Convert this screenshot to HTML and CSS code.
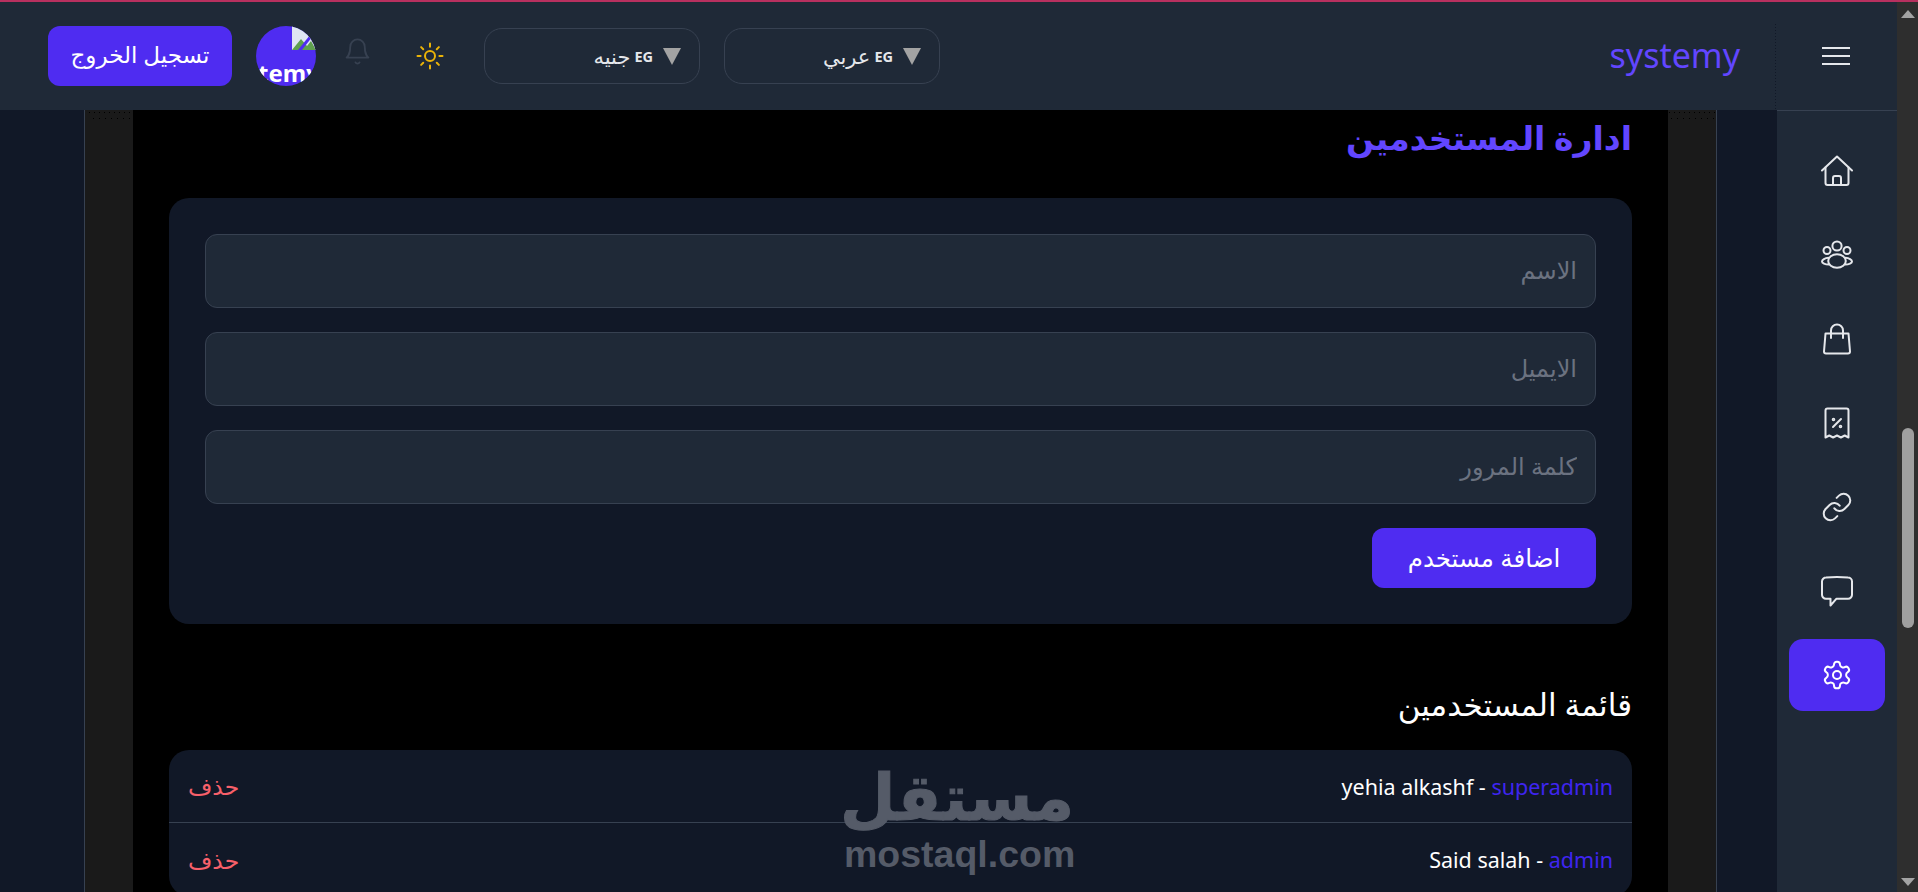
FILE: index.html
```html
<!DOCTYPE html>
<html lang="ar" dir="rtl">
<head>
    <meta charset="UTF-8">
    <title>systemy</title>
    <link rel="stylesheet" href="styles.css">
</head>
<body>
    <div class="top-line"></div>
    <div class="shell">
        <div class="scrollbar">
            <span class="arrow-up"></span>
            <div class="scroll-track"><div class="scroll-thumb"></div></div>
            <span class="arrow-down"></span>
        </div>

        <div class="main">
            <header class="header">
                <div class="menu-cell">
                    <svg class="burger" viewBox="0 0 28 18" width="28" height="18"><path d="M0 1h28M0 9h28M0 17h28"/></svg>
                </div>
                <div class="logo" dir="ltr">systemy</div>
                <div class="header-tools">
                    <div class="picker"><span class="tri"></span><span class="flag">EG</span><span>عربي</span></div>
                    <div class="picker"><span class="tri"></span><span class="flag">EG</span><span>جنيه</span></div>
                    <div class="tool tool-sun">
                        <svg viewBox="0 0 24 24" width="30" height="30" class="ico sun"><circle cx="12" cy="12" r="4"/><path d="M12 2v2.500M12 19.500V22M4.900 4.900l1.700 1.700M17.400 17.400l1.700 1.700M2 12h2.500M19.500 12H22M4.900 19.100l1.700-1.700M17.400 6.600l1.700-1.700"/></svg>
                    </div>
                    <div class="tool tool-bell">
                        <svg viewBox="0 0 24 24" width="29" height="29" class="ico bell"><path d="M6 8a6 6 0 0 1 12 0c0 7 3 9 3 9H3s3-2 3-9"/><path d="M10.300 21a1.900 1.900 0 0 0 3.400 0"/></svg>
                    </div>
                    <div class="avatar">
                        <svg class="broken" viewBox="0 0 24 24" width="24" height="24"><path d="M0 0h24v24H0z" fill="#dfe6f2"/><path d="M0 24l9-11 6 7 4-5 5 9z" fill="#5fa04e"/><path d="M6 24L22 4l2 2L10 24z" fill="#4f2cf1"/></svg>
                        <span class="avatar-alt" dir="ltr">temy</span>
                    </div>
                    <button class="logout">تسجيل الخروج</button>
                </div>
            </header>

            <div class="body-row">
                <nav class="sidebar">
                    <a class="nav-item">
                        <svg viewBox="0 0 32 32" class="ico nav-ico"><path d="M1 15.500L16 1.500l15 14"/><path d="M4.500 12.500V28a2 2 0 0 0 2 2h19a2 2 0 0 0 2-2V12.500"/><path d="M12 30v-7a2 2 0 0 1 2-2h4a2 2 0 0 1 2 2v7"/></svg>
                    </a>
                    <a class="nav-item">
                        <svg viewBox="0 0 32 32" class="ico nav-ico"><circle cx="16" cy="7" r="4.600"/><circle cx="6" cy="11.500" r="3.500"/><circle cx="26" cy="11.500" r="3.500"/><ellipse cx="16" cy="22" rx="8.800" ry="6.800"/><path d="M7.500 18.800C4 19 1 21 1 22.500s3 3 6.800 3M24.500 18.800c3.500.2 6.500 2.200 6.500 3.700s-3 3-6.800 3"/></svg>
                    </a>
                    <a class="nav-item">
                        <svg viewBox="0 0 32 32" class="ico nav-ico"><path d="M4.500 10.500h23L29 28.500a2 2 0 0 1-2 2H5a2 2 0 0 1-2-2z"/><path d="M10 15V7.500a6 6 0 0 1 12 0V15"/></svg>
                    </a>
                    <a class="nav-item">
                        <svg viewBox="0 0 32 32" class="ico nav-ico"><path d="M4.500 30.500V3.500a2 2 0 0 1 2-2h19a2 2 0 0 1 2 2v27l-3.800-2-3.800 2-3.900-2-3.900 2-3.800-2z"/><path d="M12 20l8-8"/><circle cx="12.500" cy="12.500" r=".8"/><circle cx="19.500" cy="19.500" r=".8"/></svg>
                    </a>
                    <a class="nav-item">
                        <svg viewBox="0 0 24 24" class="ico nav-ico thin"><path d="M10 13a5 5 0 0 0 7.540.54l3-3a5 5 0 0 0-7.070-7.070l-1.720 1.710"/><path d="M14 11a5 5 0 0 0-7.540-.54l-3 3a5 5 0 0 0 7.070 7.070l1.710-1.710"/></svg>
                    </a>
                    <a class="nav-item">
                        <svg viewBox="0 0 32 32" class="ico nav-ico"><path d="M5 2.500c7-.6 15-.6 22 0a4 4 0 0 1 4 4v13a4 4 0 0 1-4 4.200H15.500L9.500 30.500v-6.800H5a4 4 0 0 1-4-4.200v-13a4 4 0 0 1 4-4z"/></svg>
                    </a>
                    <a class="nav-item active">
                        <svg viewBox="0 0 24 24" class="ico nav-ico thin"><path d="M12.220 2h-.44a2 2 0 0 0-2 2v.18a2 2 0 0 1-1 1.730l-.43.25a2 2 0 0 1-2 0l-.15-.08a2 2 0 0 0-2.730.73l-.22.38a2 2 0 0 0 .73 2.730l.15.1a2 2 0 0 1 1 1.720v.51a2 2 0 0 1-1 1.740l-.15.09a2 2 0 0 0-.73 2.730l.22.38a2 2 0 0 0 2.730.73l.15-.08a2 2 0 0 1 2 0l.43.25a2 2 0 0 1 1 1.730V20a2 2 0 0 0 2 2h.44a2 2 0 0 0 2-2v-.18a2 2 0 0 1 1-1.730l.43-.25a2 2 0 0 1 2 0l.15.08a2 2 0 0 0 2.730-.73l.22-.39a2 2 0 0 0-.73-2.730l-.15-.08a2 2 0 0 1-1-1.740v-.5a2 2 0 0 1 1-1.740l.15-.09a2 2 0 0 0 .73-2.730l-.22-.38a2 2 0 0 0-2.730-.73l-.15.08a2 2 0 0 1-2 0l-.43-.25a2 2 0 0 1-1-1.730V4a2 2 0 0 0-2-2z"/><circle cx="12" cy="12" r="3"/></svg>
                    </a>
                </nav>

                <div class="content">
                    <div class="frame">
                        <div class="page">
                            <h1>ادارة المستخدمين</h1>

                            <form class="card">
                                <input type="text" placeholder="الاسم">
                                <input type="text" placeholder="الايميل">
                                <input type="text" placeholder="كلمة المرور">
                                <button type="button" class="add-btn">اضافة مستخدم</button>
                            </form>

                            <h2>قائمة المستخدمين</h2>

                            <div class="user-list">
                                <div class="user-row">
                                    <span dir="ltr"><span class="name">yehia alkashf - </span><span class="role">superadmin</span></span>
                                    <a class="del">حذف</a>
                                </div>
                                <div class="user-row">
                                    <span dir="ltr"><span class="name">Said salah - </span><span class="role">admin</span></span>
                                    <a class="del">حذف</a>
                                </div>
                            </div>
                        </div>
                    </div>
                </div>
            </div>
        </div>
    </div>

    <div class="watermark">
        <div class="wm-ar">مستقل</div>
        <div class="wm-en" dir="ltr">mostaql.com</div>
    </div>
</body>
</html>
```

FILE: styles.css
```css
* {
    margin: 0;
    padding: 0;
    box-sizing: border-box;
    font-family: "Noto Sans", "DejaVu Sans", sans-serif;
}

html, body {
    height: 892px;
    overflow: hidden;
    background-color: #111827;
}

.top-line {
    height: 2px;
    background-color: #b8305f;
}

.shell {
    display: flex;
    height: 890px;
}

/* scrollbar */
.scrollbar {
    width: 21px;
    flex-shrink: 0;
    background-color: #2e2e2e;
    display: flex;
    flex-direction: column;
    align-items: center;
}

.arrow-up, .arrow-down {
    width: 0;
    height: 0;
    border-left: 7px solid transparent;
    border-right: 7px solid transparent;
    flex-shrink: 0;
}

.arrow-up {
    border-bottom: 8px solid #a3a3a3;
    margin-top: 8px;
}

.arrow-down {
    border-top: 8px solid #a3a3a3;
    margin-bottom: 6px;
}

.scroll-track {
    flex: 1;
    width: 100%;
    padding-top: 410px;
    display: flex;
    justify-content: center;
}

.scroll-thumb {
    width: 12px;
    height: 200px;
    border-radius: 6px;
    background-color: #9f9f9f;
}

.main {
    flex: 1;
    min-width: 0;
    display: flex;
    flex-direction: column;
}

/* header */
.header {
    height: 108px;
    flex-shrink: 0;
    background-color: #1f2937;
    display: flex;
    align-items: center;
    position: relative;
    z-index: 2;
}

.menu-cell {
    width: 122px;
    height: 100%;
    display: flex;
    align-items: center;
    justify-content: center;
    background-image: repeating-linear-gradient(180deg, #111827 0 1px, transparent 1px 3px);
    background-size: 1px 86px;
    background-position: left bottom;
    background-repeat: no-repeat;
    flex-shrink: 0;
}

.burger path {
    stroke: #e5e7eb;
    stroke-width: 2;
    fill: none;
}

.logo {
    font-size: 34px;
    color: #6246ff;
    margin-right: 35px;
    line-height: 1;
    padding-bottom: 2px;
}

.header-tools {
    margin-right: auto;
    padding-left: 48px;
    display: flex;
    align-items: center;
}

.picker {
    width: 216px;
    height: 56px;
    border: 1px solid #374151;
    border-radius: 18px;
    padding: 0 18px;
    display: flex;
    align-items: center;
    gap: 4px;
    color: #e5e7eb;
    font-size: 21px;
    margin-left: 24px;
}

.picker .flag {
    font-size: 14.500px;
    font-weight: 700;
    margin: 0 6px 0 0;
}

.tri {
    width: 0;
    height: 0;
    border-left: 9.500px solid transparent;
    border-right: 9.500px solid transparent;
    border-top: 17px solid #a3a3a3;
}

.tool {
    display: flex;
    align-items: center;
    justify-content: center;
}

.tool-sun {
    margin-left: 43px;
    margin-right: 15px;
}

.tool-bell {
    margin-left: 27px;
    margin-bottom: 10px;
}

.ico {
    fill: none;
    stroke: #e5e7eb;
    stroke-width: 2;
    stroke-linecap: round;
    stroke-linejoin: round;
}

.sun {
    stroke: #eab308;
    stroke-width: 1.600;
}

.bell {
    stroke: #374151;
    stroke-width: 1.500;
}

.avatar {
    width: 60px;
    height: 60px;
    border-radius: 50%;
    background-color: #4f2cf1;
    overflow: hidden;
    position: relative;
    margin-left: 24px;
}

.broken {
    position: absolute;
    top: 0;
    right: 0;
}

.avatar-alt {
    position: absolute;
    top: 32px;
    left: 2px;
    color: #fff;
    font-weight: 700;
    font-size: 24px;
    line-height: 30px;
    white-space: nowrap;
}

button {
    background-color: #4f2cf1;
    color: #fff;
    border: none;
    cursor: pointer;
}

.logout {
    width: 184px;
    height: 60px;
    border-radius: 12px;
    font-size: 23px;
    padding-bottom: 4px;
}

/* sidebar */
.body-row {
    flex: 1;
    min-height: 0;
    display: flex;
}

.sidebar {
    width: 120px;
    flex-shrink: 0;
    background-color: #1f2937;
    border-top: 1px solid #374151;
    padding: 24px 12px 0;
    display: flex;
    flex-direction: column;
    gap: 12px;
}

.nav-item {
    height: 72px;
    border-radius: 14px;
    display: flex;
    align-items: center;
    justify-content: center;
}

.nav-item.active {
    background-color: #4f2cf1;
}

.nav-ico {
    width: 32px;
    height: 32px;
}

.nav-ico.thin {
    stroke-width: 1.500;
}

.active .nav-ico {
    stroke: #fff;
}

/* page */
.content {
    flex: 1;
    min-width: 0;
    padding: 0 60px 0 84px;
    overflow: hidden;
}

.frame {
    height: 100%;
    border-left: 1px solid #374151;
    border-right: 1px solid #374151;
    background-color: #1a1a1a;
    background-image:
        repeating-linear-gradient(90deg, #000 0 1px, transparent 1px 5px),
        repeating-linear-gradient(90deg, #000 0 1px, transparent 1px 6px);
    background-size: 100% 1px, 100% 1px;
    background-position: 4px 2px, 8px 8px;
    background-repeat: no-repeat;
    padding: 0 48px;
}

.page {
    height: 100%;
    background-color: #000;
    padding: 0 36px;
}

h1 {
    color: #6246ff;
    font-size: 33px;
    font-weight: 700;
    height: 88px;
    line-height: 50px;
    padding-top: 3px;
}

.card {
    background-color: #111827;
    border-radius: 20px;
    padding: 36px;
    display: flex;
    flex-direction: column;
    gap: 24px;
    height: 426px;
}

input {
    height: 74px;
    flex-shrink: 0;
    background-color: #1f2937;
    border: 1px solid #374151;
    border-radius: 12px;
    padding: 0 18px 4px;
    color: #e5e7eb;
    font-size: 24px;
}

input::placeholder {
    color: #6b7280;
}

.add-btn {
    width: 224px;
    height: 60px;
    border-radius: 12px;
    font-size: 24.500px;
    padding-bottom: 2px;
}

h2 {
    color: #fff;
    font-size: 31px;
    font-weight: 400;
    height: 126px;
    line-height: 36px;
    padding-top: 62px;
}

.user-list {
    background-color: #111827;
    border-radius: 20px;
    overflow: hidden;
}

.user-row {
    height: 73px;
    padding: 0 19px;
    display: flex;
    align-items: center;
    justify-content: space-between;
    font-size: 21.500px;
    border-bottom: 1px solid #374151;
}

.user-row:last-child {
    border-bottom: none;
}

.name {
    color: #fff;
}

.role {
    color: #3f25f0;
}

.del {
    color: #f8606a;
    font-size: 23.500px;
}

/* watermark sits over the page */
.watermark {
    position: absolute;
    left: 844px;
    top: 757px;
    width: 230px;
    text-align: center;
    color: #555b68;
    pointer-events: none;
}

.wm-ar {
    font-size: 64px;
    font-weight: 700;
    line-height: 77px;
    padding-left: 5px;
    -webkit-text-stroke: 1px #555b68;
}

.wm-en {
    font-size: 37.500px;
    font-weight: 700;
    line-height: 40px;
    font-family: "Liberation Sans", sans-serif;
}
```
